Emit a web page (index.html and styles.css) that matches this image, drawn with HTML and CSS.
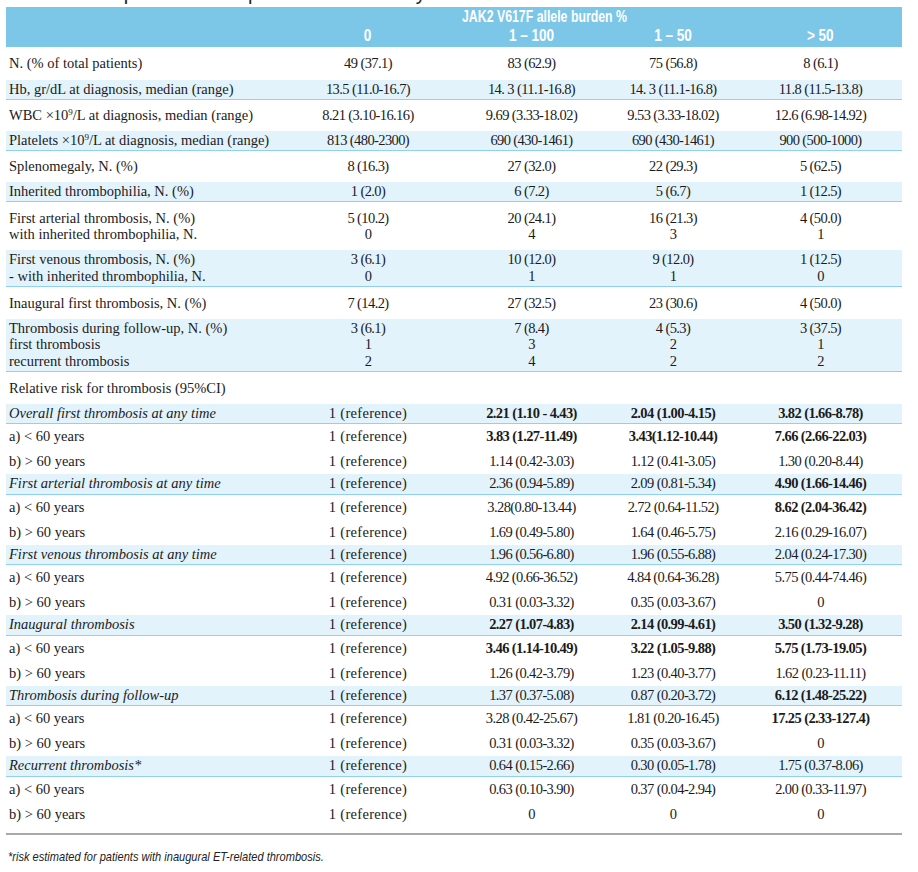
FILE: index.html
```html
<!DOCTYPE html>
<html lang="en">
<head>
<meta charset="utf-8">
<title>JAK2 V617F allele burden and thrombosis</title>
<link rel="stylesheet" href="styles.css">
</head>
<body>
<div class="page">
  <h1 class="caption">Table 3. Comparison of ET patients stratified by JAK2 V617F allele burden</h1>
  <table class="data">
    <colgroup>
      <col class="c-label">
      <col class="c-zero">
      <col class="c-all">
      <col class="c-low">
      <col class="c-high">
    </colgroup>
    <thead>
      <tr class="head-top">
        <th></th>
        <th></th>
        <th colspan="3" class="span"><span class="cond left">JAK2 V617F allele burden %</span></th>
      </tr>
      <tr class="head-cols">
        <th></th>
        <th><span class="cond">0</span></th>
        <th><span class="cond">1 – 100</span></th>
        <th><span class="cond">1 – 50</span></th>
        <th><span class="cond">&gt; 50</span></th>
      </tr>
    </thead>
    <tbody>
      <tr class="row first">
        <td>N. (% of total patients)</td>
        <td>49 (37.1)</td><td>83 (62.9)</td><td>75 (56.8)</td><td>8 (6.1)</td>
      </tr>
      <tr class="band">
        <td>Hb, gr/dL at diagnosis, median (range)</td>
        <td>13.5 (11.0-16.7)</td><td>14. 3 (11.1-16.8)</td><td>14. 3 (11.1-16.8)</td><td>11.8 (11.5-13.8)</td>
      </tr>
      <tr class="row">
        <td>WBC ×10<sup>9</sup>/L at diagnosis, median (range)</td>
        <td>8.21 (3.10-16.16)</td><td>9.69 (3.33-18.02)</td><td>9.53 (3.33-18.02)</td><td>12.6 (6.98-14.92)</td>
      </tr>
      <tr class="band">
        <td>Platelets ×10<sup>9</sup>/L at diagnosis, median (range)</td>
        <td>813 (480-2300)</td><td>690 (430-1461)</td><td>690 (430-1461)</td><td>900 (500-1000)</td>
      </tr>
      <tr class="row">
        <td>Splenomegaly, N. (%)</td>
        <td>8 (16.3)</td><td>27 (32.0)</td><td>22 (29.3)</td><td>5 (62.5)</td>
      </tr>
      <tr class="band">
        <td>Inherited thrombophilia, N. (%)</td>
        <td>1 (2.0)</td><td>6 (7.2)</td><td>5 (6.7)</td><td>1 (12.5)</td>
      </tr>
      <tr class="row roomy">
        <td>First arterial thrombosis, N. (%)<br>with inherited thrombophilia, N.</td>
        <td>5 (10.2)<br>0</td><td>20 (24.1)<br>4</td><td>16 (21.3)<br>3</td><td>4 (50.0)<br>1</td>
      </tr>
      <tr class="band">
        <td>First venous thrombosis, N. (%)<br>- with inherited thrombophilia, N.</td>
        <td>3 (6.1)<br>0</td><td>10 (12.0)<br>1</td><td>9 (12.0)<br>1</td><td>1 (12.5)<br>0</td>
      </tr>
      <tr class="row roomy">
        <td>Inaugural first thrombosis, N. (%)</td>
        <td>7 (14.2)</td><td>27 (32.5)</td><td>23 (30.6)</td><td>4 (50.0)</td>
      </tr>
      <tr class="band">
        <td>Thrombosis during follow-up, N. (%)<br>first thrombosis<br>recurrent thrombosis</td>
        <td>3 (6.1)<br>1<br>2</td><td>7 (8.4)<br>3<br>4</td><td>4 (5.3)<br>2<br>2</td><td>3 (37.5)<br>1<br>2</td>
      </tr>
      <tr class="row roomy">
        <td>Relative risk for thrombosis (95%CI)</td>
        <td></td><td></td><td></td><td></td>
      </tr>

      <tr class="band">
        <td class="group">Overall first thrombosis at any time</td>
        <td class="ref">1 (reference)</td><td class="sig">2.21 (1.10 - 4.43)</td><td class="sig">2.04 (1.00-4.15)</td><td class="sig">3.82 (1.66-8.78)</td>
      </tr>
      <tr class="sub">
        <td>a) &lt; 60 years</td>
        <td class="ref">1 (reference)</td><td class="sig">3.83 (1.27-11.49)</td><td class="sig">3.43(1.12-10.44)</td><td class="sig">7.66 (2.66-22.03)</td>
      </tr>
      <tr class="sub">
        <td>b) &gt; 60 years</td>
        <td class="ref">1 (reference)</td><td>1.14 (0.42-3.03)</td><td>1.12 (0.41-3.05)</td><td>1.30 (0.20-8.44)</td>
      </tr>

      <tr class="band">
        <td class="group">First arterial thrombosis at any time</td>
        <td class="ref">1 (reference)</td><td>2.36 (0.94-5.89)</td><td>2.09 (0.81-5.34)</td><td class="sig">4.90 (1.66-14.46)</td>
      </tr>
      <tr class="sub">
        <td>a) &lt; 60 years</td>
        <td class="ref">1 (reference)</td><td>3.28(0.80-13.44)</td><td>2.72 (0.64-11.52)</td><td class="sig">8.62 (2.04-36.42)</td>
      </tr>
      <tr class="sub">
        <td>b) &gt; 60 years</td>
        <td class="ref">1 (reference)</td><td>1.69 (0.49-5.80)</td><td>1.64 (0.46-5.75)</td><td>2.16 (0.29-16.07)</td>
      </tr>

      <tr class="band">
        <td class="group">First venous thrombosis at any time</td>
        <td class="ref">1 (reference)</td><td>1.96 (0.56-6.80)</td><td>1.96 (0.55-6.88)</td><td>2.04 (0.24-17.30)</td>
      </tr>
      <tr class="sub">
        <td>a) &lt; 60 years</td>
        <td class="ref">1 (reference)</td><td>4.92 (0.66-36.52)</td><td>4.84 (0.64-36.28)</td><td>5.75 (0.44-74.46)</td>
      </tr>
      <tr class="sub">
        <td>b) &gt; 60 years</td>
        <td class="ref">1 (reference)</td><td>0.31 (0.03-3.32)</td><td>0.35 (0.03-3.67)</td><td>0</td>
      </tr>

      <tr class="band">
        <td class="group">Inaugural thrombosis</td>
        <td class="ref">1 (reference)</td><td class="sig">2.27 (1.07-4.83)</td><td class="sig">2.14 (0.99-4.61)</td><td class="sig">3.50 (1.32-9.28)</td>
      </tr>
      <tr class="sub">
        <td>a) &lt; 60 years</td>
        <td class="ref">1 (reference)</td><td class="sig">3.46 (1.14-10.49)</td><td class="sig">3.22 (1.05-9.88)</td><td class="sig">5.75 (1.73-19.05)</td>
      </tr>
      <tr class="sub">
        <td>b) &gt; 60 years</td>
        <td class="ref">1 (reference)</td><td>1.26 (0.42-3.79)</td><td>1.23 (0.40-3.77)</td><td>1.62 (0.23-11.11)</td>
      </tr>

      <tr class="band">
        <td class="group">Thrombosis during follow-up</td>
        <td class="ref">1 (reference)</td><td>1.37 (0.37-5.08)</td><td>0.87 (0.20-3.72)</td><td class="sig">6.12 (1.48-25.22)</td>
      </tr>
      <tr class="sub">
        <td>a) &lt; 60 years</td>
        <td class="ref">1 (reference)</td><td>3.28 (0.42-25.67)</td><td>1.81 (0.20-16.45)</td><td class="sig">17.25 (2.33-127.4)</td>
      </tr>
      <tr class="sub">
        <td>b) &gt; 60 years</td>
        <td class="ref">1 (reference)</td><td>0.31 (0.03-3.32)</td><td>0.35 (0.03-3.67)</td><td>0</td>
      </tr>

      <tr class="band">
        <td class="group">Recurrent thrombosis*</td>
        <td class="ref">1 (reference)</td><td>0.64 (0.15-2.66)</td><td>0.30 (0.05-1.78)</td><td>1.75 (0.37-8.06)</td>
      </tr>
      <tr class="sub">
        <td>a) &lt; 60 years</td>
        <td class="ref">1 (reference)</td><td>0.63 (0.10-3.90)</td><td>0.37 (0.04-2.94)</td><td>2.00 (0.33-11.97)</td>
      </tr>
      <tr class="sub">
        <td>b) &gt; 60 years</td>
        <td class="ref">1 (reference)</td><td>0</td><td>0</td><td>0</td>
      </tr>
    </tbody>
  </table>
  <div class="rule"></div>
  <p class="note">*risk estimated for patients with inaugural ET-related thrombosis.</p>
</div>
</body>
</html>
```

FILE: styles.css
```css
html, body {
  margin: 0;
  padding: 0;
  background: #ffffff;
}

.page {
  padding: 0 0 0 6px;
  width: 896px;
  color: #1b1b1b;
  font-family: "Liberation Serif", "Times New Roman", serif;
  font-size: 14.5px;
}

.caption {
  margin: -18px 0 3px 0;
  font-family: "Liberation Sans", Arial, sans-serif;
  font-weight: normal;
  font-size: 20px;
  line-height: 22px;
  white-space: nowrap;
  color: #222;
  overflow: hidden;
}

.data {
  width: 896px;
  table-layout: fixed;
  border-collapse: collapse;
  border-spacing: 0;
}

.c-label { width: 274px; }
.c-zero { width: 176px; }
.c-all { width: 151px; }
.c-low { width: 132px; }
.c-high { width: 163px; }

thead tr {
  background: #7cc7e8;
}

thead th {
  color: #ffffff;
  font-family: "Liberation Sans", Arial, sans-serif;
  font-weight: bold;
  font-size: 15px;
  line-height: 18px;
  text-align: center;
  padding: 0;
  white-space: nowrap;
}

.cond {
  display: inline-block;
  transform: scaleX(0.82);
  transform-origin: center;
}

.cond.left {
  transform: scaleX(0.77);
  transform-origin: left center;
}

.head-top th {
  padding-top: 1px;
}

.head-top .span {
  text-align: left;
  padding-left: 6px;
  font-size: 16px;
}

.head-cols th {
  font-size: 16.5px;
  padding-bottom: 3px;
}

tbody td {
  line-height: 16.5px;
  text-align: center;
  padding: 0;
  letter-spacing: -0.6px;
  vertical-align: middle;
  white-space: nowrap;
}

tbody td:first-child {
  text-align: left;
  padding-left: 3px;
  letter-spacing: 0;
}

tbody td.ref {
  letter-spacing: 0.3px;
}

tbody td.sig {
  font-weight: bold;
}

tbody td.group {
  font-style: italic;
}

tbody sup {
  font-size: 9px;
  line-height: 0;
  vertical-align: 5px;
}

.row td {
  padding-top: 7px;
  padding-bottom: 7px;
}

.row.first td {
  padding-top: 8px;
  padding-bottom: 8px;
}

.row.roomy td {
  padding-top: 7.5px;
  padding-bottom: 7.5px;
}

.band td {
  background: #e3f3fb;
  padding-top: 1px;
  padding-bottom: 2px;
  border-bottom: 1px solid #8fd1ee;
}

.sub td {
  padding-top: 4.25px;
  padding-bottom: 4.25px;
}

.rule {
  margin-top: 6px;
  border-top: 2px solid #a9a9a9;
  width: 896px;
}

.note {
  margin: 14px 0 0 2px;
  font-family: "Liberation Sans", Arial, sans-serif;
  font-style: italic;
  font-size: 13.5px;
  line-height: 16px;
  color: #222;
  transform: scaleX(0.82);
  transform-origin: left center;
}
```
